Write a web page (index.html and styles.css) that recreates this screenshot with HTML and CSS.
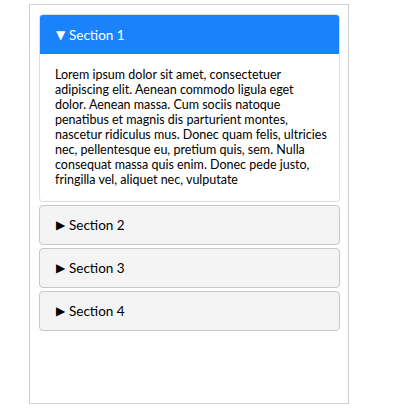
FILE: index.html
```html
<!DOCTYPE html>
<html>
<head>
<meta charset="utf-8">
<link rel="stylesheet" href="styles.css">
</head>
<body>
<div class="frame">
  <div class="accordion">
    <div class="panel open">
      <div class="head"><span class="arrow">▼</span>Section 1</div>
      <div class="body">Lorem ipsum dolor sit amet, consectetuer<br>adipiscing elit. Aenean commodo ligula eget<br>dolor. Aenean massa. Cum sociis natoque<br>penatibus et magnis dis parturient montes,<br>nascetur ridiculus mus. Donec quam felis, ultricies<br>nec, pellentesque eu, pretium quis, sem. Nulla<br>consequat massa quis enim. Donec pede justo,<br>fringilla vel, aliquet nec, vulputate</div>
    </div>
    <div class="panel">
      <div class="head"><span class="arrow">▶</span>Section 2</div>
    </div>
    <div class="panel">
      <div class="head"><span class="arrow">▶</span>Section 3</div>
    </div>
    <div class="panel">
      <div class="head"><span class="arrow">▶</span>Section 4</div>
    </div>
  </div>
</div>
</body>
</html>
```

FILE: styles.css
```css
html, body {
  margin: 0;
  padding: 0;
  background: #fff;
}
body {
  font-family: Lato, "Noto Sans", sans-serif;
  font-size: 13px;
  color: #000;
}
.frame {
  box-sizing: border-box;
  margin: 4px 0 0 29px;
  width: 320px;
  height: 400px;
  border: 1px solid #cfcfcf;
  padding: 9px 8px 0 9px;
}
.accordion {
  display: flex;
  flex-direction: column;
  gap: 3px;
}
.panel {
  border: 1px solid #c8c8c8;
  border-radius: 4px;
  background: #f4f4f4;
  overflow: hidden;
}
.panel.open {
  border-color: #dddddd;
  background: #fff;
}
.head {
  height: 38px;
  display: flex;
  align-items: center;
  padding-left: 16px;
  font-size: 13.5px;
}
.open .head {
  background: #1a82fb;
  color: #fff;
  height: 39px;
}
.arrow {
  width: 13px;
  font-size: 12px;
  font-family: "DejaVu Sans", sans-serif;
}
.body {
  padding: 13px 6px 14px 15px;
  line-height: 15px;
  font-size: 12.5px;
  white-space: nowrap;
}
```
